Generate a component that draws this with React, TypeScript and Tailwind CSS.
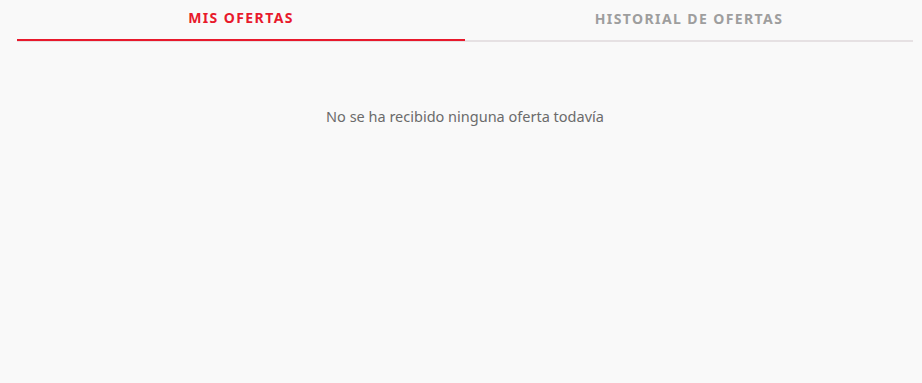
export default function App() {
  return (
    <div
      className="min-h-[383px] w-full bg-[#f9f9f9] pl-[17px] pr-[9px]"
      style={{ fontFamily: '"Noto Sans", "Open Sans", sans-serif' }}
    >
      <div className="flex border-b-2 border-[#e6e1e3]">
        <button className="-mb-px flex h-[41px] w-1/2 items-center justify-center border-b-2 border-[#e8192c] pb-[3px] text-sm font-bold tracking-widest text-[#e8192c]">
          MIS OFERTAS
        </button>
        <button className="flex h-[40px] w-1/2 items-center justify-center pb-[3px] text-sm font-bold tracking-widest text-[#9e9e9e]">
          HISTORIAL DE OFERTAS
        </button>
      </div>
      <p className="pt-[64px] text-center text-[14.5px] text-[#6b6b6b]">
        No se ha recibido ninguna oferta todavía
      </p>
    </div>
  );
}
